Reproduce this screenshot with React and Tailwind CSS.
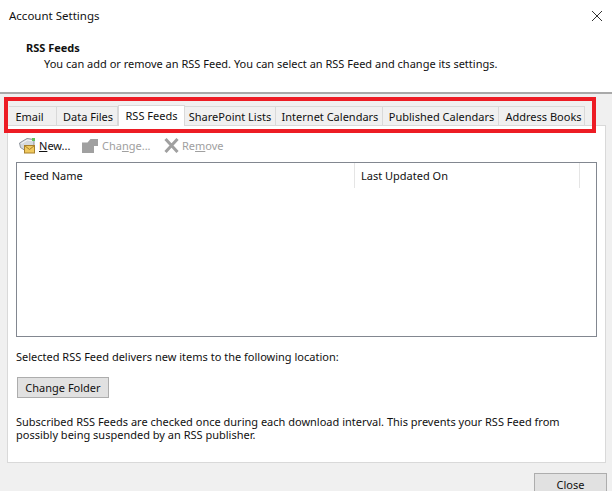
import React from 'react';

const tabs = [
  { label: 'Email', width: 'w-[48px] pr-[6px]' },
  { label: 'Data Files', width: 'w-[61px] pl-[2px]' },
  { label: 'RSS Feeds', width: 'w-[67px]', active: true },
  { label: 'SharePoint Lists', width: 'w-[91px]' },
  { label: 'Internet Calendars', width: 'w-[107px] pl-[2px]' },
  { label: 'Published Calendars', width: 'w-[116px] pl-[2px]' },
  { label: 'Address Books', width: 'w-[86px] pl-[4px]' },
];

function NewIcon() {
  return (
    <svg width="17" height="17" viewBox="0 0 17 17" className="shrink-0">
      <path d="M0.5 6 L8 1.5 L15 2.5 L15 9 L7 14 L1.5 10.5 Z" fill="#d5d9de" stroke="#8d949c" />
      <path d="M2.5 6.5 L8.5 3 L13.5 3.8" fill="none" stroke="#f5f6f7" />
      <rect x="5.5" y="8.5" width="10" height="7.5" fill="#f0c95f" stroke="#a8802c" />
      <path d="M5.5 8.5 L10.5 12.5 L15.5 8.5" fill="none" stroke="#a8802c" />
      <rect x="13" y="1" width="3" height="3" fill="#62c25a" />
    </svg>
  );
}

function ChangeIcon() {
  return (
    <svg width="16" height="16" viewBox="0 0 16 16" className="shrink-0">
      <path d="M0 4.5 H5.5 L8.5 1 H16 V8 H12 V15 H0 Z" fill="#a0a0a0" />
    </svg>
  );
}

function RemoveIcon() {
  return (
    <svg width="15" height="15" viewBox="0 0 15 15" className="shrink-0">
      <path d="M1.5 1 L13.5 14 M13.5 1 L1.5 14" stroke="#a0a0a0" strokeWidth="3" />
    </svg>
  );
}

export default function App() {
  return (
    <div className="relative w-[612px] h-[491px] overflow-hidden bg-[#f0f0f0] text-[11px] leading-[13px] text-[#111] font-['Noto_Sans','Open_Sans',sans-serif]">
      <div className="h-[94px] bg-white border-b-2 border-[#a9a9a9] relative">
        <div className="flex justify-between items-center pl-[9px] pr-[9px] pt-[9px] text-[11.5px]">
          <span>Account Settings</span>
          <svg width="12" height="12" viewBox="0 0 12 12">
            <path d="M1 1 L11 11 M11 1 L1 11" stroke="#333" strokeWidth="1" />
          </svg>
        </div>
        <div className="pl-[26px] pt-[19px] font-bold">RSS Feeds</div>
        <div className="pl-[44px] pt-[3px]">You can add or remove an RSS Feed. You can select an RSS Feed and change its settings.</div>
      </div>

      <div className="flex items-end h-[31px] pl-[9px]">
        {tabs.map((tab) => (
          <div
            key={tab.label}
            className={
              tab.active
                ? `${tab.width} h-[21px] pb-[2px] -mb-px z-10 flex items-center justify-center bg-white border border-b-0 border-[#d9d9d9]`
                : `${tab.width} h-[19px] pt-px flex items-center justify-center bg-[#f0f0f0] border border-b-0 border-l-0 border-[#d9d9d9]`
            }
          >
            {tab.label}
          </div>
        ))}
      </div>

      <div className="ml-[7px] mr-[6px] h-[338px] bg-white border border-[#d9d9d9] px-[8px]">
        <div className="flex items-center h-[36px] pt-[3px] pl-[3px] text-[#a0a0a0]">
          <NewIcon />
          <span className="ml-[3px] w-[43px] text-[#111]"><u>N</u>ew...</span>
          <ChangeIcon />
          <span className="ml-[4px] w-[62px]">Cha<u>n</u>ge...</span>
          <RemoveIcon />
          <span className="ml-[3px]">Re<u>m</u>ove</span>
        </div>
        <div className="h-[175px] border border-[#828790] flex items-start">
          <div className="w-[338px] h-[25px] pl-[7px] flex items-center border-r border-[#e5e5e5]">Feed Name</div>
          <div className="w-[225px] h-[25px] pl-[6px] flex items-center border-r border-[#e5e5e5]">Last Updated On</div>
        </div>
        <div className="pt-[13px]">Selected RSS Feed delivers new items to the following location:</div>
        <button className="block mt-[14px] ml-px w-[92px] h-[21px] bg-[#e1e1e1] border border-[#adadad]">Change Folder</button>
        <div className="pt-[17px] w-[570px]">
          Subscribed RSS Feeds are checked once during each download interval. This prevents your RSS Feed from possibly being suspended by an RSS publisher.
        </div>
      </div>

      <div className="flex justify-end pt-[10px] pr-[5px]">
        <button className="w-[73px] h-[22px] bg-[#e1e1e1] border border-[#adadad]">Close</button>
      </div>

      {/* red highlight drawn over the tab strip */}
      <div className="absolute left-[4px] top-[97px] w-[592px] h-[36px] border-[4px] border-[#ed1c24] pointer-events-none" />
    </div>
  );
}
